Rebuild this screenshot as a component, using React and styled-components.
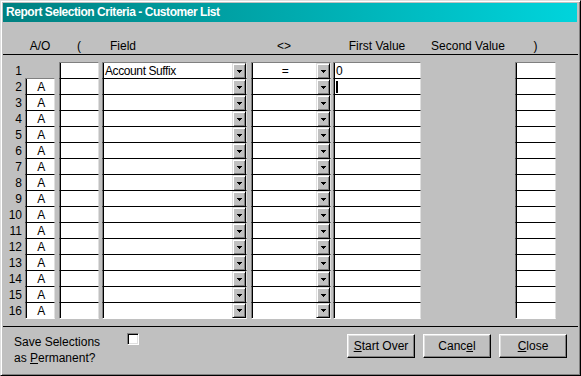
import React from 'react'
import styled, { createGlobalStyle } from 'styled-components'

const COLS = '22px 34px 43px 149px 82px 88px 94px 41px'

const GlobalStyle = createGlobalStyle`
    body {
        margin: 0;
        background: #c0c0c0;
        font-family: "Liberation Sans", Arial, sans-serif;
        font-size: 12px;
        color: #000;
    }
`

const Window = styled.div`
    width: 581px;
    height: 376px;
    box-sizing: border-box;
    padding: 2px;
    background: #c0c0c0;
    border: 1px solid;
    border-color: #dfdfdf #000 #000 #dfdfdf;
    box-shadow: inset 1px 1px #fff, inset -1px -1px #808080;
    display: flex;
    flex-direction: column;
    overflow: hidden;
`

const TitleBar = styled.div`
    height: 19px;
    background: linear-gradient(to right, #008080, #00d4dc);
    color: #fff;
    font-weight: bold;
    font-size: 12px;
    letter-spacing: -0.45px;
    line-height: 19px;
    padding-left: 3px;
    margin-right: 1px;
`

const HeaderRow = styled.div`
    display: grid;
    grid-template-columns: ${COLS};
    height: 15px;
    margin-top: 17px;
    border-bottom: 1px solid #000;
    line-height: 15px;
`

const HeaderCell = styled.div`
    width: ${p => p.$w}px;
    text-align: ${p => p.$align || 'center'};
    padding-left: ${p => p.$pad || 0}px;
    box-sizing: border-box;
    white-space: nowrap;
`

const Rows = styled.div`
    margin-top: 7px;
    display: flex;
    flex-direction: column;
`

const Row = styled.div`
    display: grid;
    grid-template-columns: ${COLS};
    height: ${p => (p.$last ? 17 : 16)}px;
`

const RowNum = styled.div`
    text-align: right;
    padding-right: 3px;
    line-height: 16px;
    padding-top: 1px;
`

const Cell = styled.div`
    width: ${p => p.$w}px;
    box-sizing: border-box;
    background: #fff;
    border-top: 1px solid ${p => (p.$first ? '#808080' : '#000')};
    border-left: 1px solid #808080;
    border-right: 1px solid #dfdfdf;
    border-bottom: ${p => (p.$last ? '1px solid #fff' : 'none')};
    box-shadow: inset 1px 0 #000;
    display: flex;
    align-items: stretch;
    line-height: 14px;
`

const CellText = styled.div`
    flex: 1;
    padding-left: 2px;
    letter-spacing: -0.4px;
    white-space: nowrap;
    overflow: hidden;
    display: flex;
    align-items: center;
    justify-content: ${p => (p.$center ? 'center' : 'flex-start')};
`

const Caret = styled.span`
    display: inline-block;
    width: 2px;
    height: 12px;
    background: #000;
`

const DropBtn = styled.div`
    width: 14px;
    box-sizing: border-box;
    background: #c0c0c0;
    border: 1px solid;
    border-color: #dfdfdf #000 #000 #dfdfdf;
    box-shadow: inset 1px 1px #fff, inset -1px -1px #808080;
    display: flex;
    align-items: center;
    justify-content: center;
`

const Separator = styled.div`
    margin-top: 7px;
    border-top: 1px solid #000;
`

const Footer = styled.div`
    display: flex;
    padding: 6px 11px 0 11px;
`

const SaveLabel = styled.div`
    width: 113px;
    line-height: 16px;
    margin-top: 1px;
`

const Ul = styled.span`
    text-decoration: underline;
    text-underline-offset: 1px;
`

const Checkbox = styled.div`
    width: 12px;
    height: 12px;
    box-sizing: border-box;
    background: #fff;
    border: 1px solid;
    border-color: #808080 #fff #fff #808080;
    box-shadow: inset 1px 1px #000, inset -1px -1px #dfdfdf;
`

const Buttons = styled.div`
    margin-left: auto;
    display: flex;
    gap: 8px;
    padding-top: 1px;
`

const Button = styled.button`
    width: 68px;
    height: 24px;
    box-sizing: border-box;
    padding: 0;
    background: #c0c0c0;
    font-family: inherit;
    font-size: 12px;
    color: #000;
    border: 1px solid;
    border-color: #fff #000 #000 #fff;
    box-shadow: inset -1px -1px #808080, inset 1px 1px #dfdfdf;
`

const Arrow = () => (
    <svg width="5" height="3" shapeRendering="crispEdges">
        <rect x="0" y="0" width="5" height="1" fill="#000" />
        <rect x="1" y="1" width="3" height="1" fill="#000" />
        <rect x="2" y="2" width="1" height="1" fill="#000" />
    </svg>
)

const rows = Array.from({ length: 16 }, (_, i) => ({
    n: i + 1,
    ao: i === 0 ? null : 'A',
    field: i === 0 ? 'Account Suffix' : '',
    op: i === 0 ? '=' : '',
    first: i === 0 ? '0' : '',
    caret: i === 1,
}))

export default function App() {
    return (
        <>
            <GlobalStyle />
            <Window>
                <TitleBar>Report Selection Criteria - Customer List</TitleBar>
                <HeaderRow>
                    <div />
                    <HeaderCell $w={30}>A/O</HeaderCell>
                    <HeaderCell $w={40}>(</HeaderCell>
                    <HeaderCell $w={145} $align="left" $pad={8}>Field</HeaderCell>
                    <HeaderCell $w={66}>&lt;&gt;</HeaderCell>
                    <HeaderCell $w={88}>First Value</HeaderCell>
                    <HeaderCell $w={94}>Second Value</HeaderCell>
                    <HeaderCell $w={41}>)</HeaderCell>
                </HeaderRow>
                <Rows>
                    {rows.map((r, i) => {
                        const first = i === 0
                        const last = i === rows.length - 1
                        return (
                            <Row key={r.n} $last={last}>
                                <RowNum>{r.n}</RowNum>
                                {r.ao ? (
                                    <Cell $w={30} $first={i === 1} $last={last}>
                                        <CellText $center>{r.ao}</CellText>
                                    </Cell>
                                ) : <div />}
                                <Cell $w={40} $first={first} $last={last} />
                                <Cell $w={145} $first={first} $last={last}>
                                    <CellText>{r.field}</CellText>
                                    <DropBtn><Arrow /></DropBtn>
                                </Cell>
                                <Cell $w={80} $first={first} $last={last}>
                                    <CellText $center>{r.op}</CellText>
                                    <DropBtn><Arrow /></DropBtn>
                                </Cell>
                                <Cell $w={88} $first={first} $last={last}>
                                    <CellText>{r.caret ? <Caret /> : r.first}</CellText>
                                </Cell>
                                <div />
                                <Cell $w={41} $first={first} $last={last} />
                            </Row>
                        )
                    })}
                </Rows>
                <Separator />
                <Footer>
                    <SaveLabel>
                        Save Selections<br />
                        as <Ul>P</Ul>ermanent?
                    </SaveLabel>
                    <Checkbox />
                    <Buttons>
                        <Button><Ul>S</Ul>tart Over</Button>
                        <Button>Canc<Ul>e</Ul>l</Button>
                        <Button><Ul>C</Ul>lose</Button>
                    </Buttons>
                </Footer>
            </Window>
        </>
    )
}
